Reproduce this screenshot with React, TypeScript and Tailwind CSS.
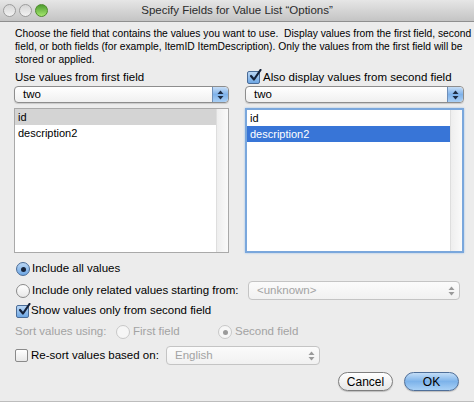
import React from "react";

// ── small mac-style controls ───────────────────────────
function Arrows({ active }: { active: boolean }) {
  return (
    <div
      className={`w-[16px] self-stretch flex items-center justify-center rounded-r-[4px] ${
        active
          ? "bg-gradient-to-b from-[#c6ddf6] via-[#7fb2ea] to-[#a9cff5] border-l border-[#6f8fb8]"
          : ""
      }`}
    >
      <svg width="7" height="10" viewBox="0 0 7 10">
        <path d="M3.5 0.5 L6.5 4 L0.5 4 Z" fill={active ? "#1d2c44" : "#9a9a9a"} />
        <path d="M3.5 9.5 L6.5 6 L0.5 6 Z" fill={active ? "#1d2c44" : "#9a9a9a"} />
      </svg>
    </div>
  );
}

function Popup({
  label,
  className,
  disabled = false,
}: {
  label: string;
  className: string;
  disabled?: boolean;
}) {
  return (
    <div
      className={`flex items-center rounded-[4px] border overflow-hidden shrink-0 ${
        disabled
          ? "border-[#c4c4c4] bg-gradient-to-b from-[#fbfbfb] to-[#f1f1f1]"
          : "border-[#8d8d8d] bg-gradient-to-b from-white to-[#f0f0f0] shadow-[0_1px_1px_rgba(0,0,0,0.15)]"
      } ${className}`}
    >
      <span
        className={`flex-1 pl-[8px] text-[11.5px] leading-none ${
          disabled ? "text-[#a3a3a3]" : "text-black"
        }`}
      >
        {label}
      </span>
      <Arrows active={!disabled} />
    </div>
  );
}

function Radio({ on = false, disabled = false }: { on?: boolean; disabled?: boolean }) {
  const ring = disabled ? "border-[#c8c8c8] bg-[#f6f6f6]" : on
    ? "border-[#4a6c98] bg-gradient-to-b from-[#b9d6f4] to-[#6ea7e4]"
    : "border-[#8a8a8a] bg-gradient-to-b from-white to-[#e8e8e8]";
  return (
    <span className={`w-[14px] h-[14px] rounded-full border flex items-center justify-center shrink-0 ${ring}`}>
      {on && (
        <span className={`w-[5px] h-[5px] rounded-full ${disabled ? "bg-[#9a9a9a]" : "bg-[#16233a]"}`} />
      )}
    </span>
  );
}

function Check({ on = false }: { on?: boolean }) {
  return (
    <span
      className={`relative w-[13px] h-[13px] rounded-[2px] border shrink-0 ${
        on
          ? "border-[#4a6c98] bg-gradient-to-b from-[#b9d6f4] to-[#6ea7e4]"
          : "border-[#8a8a8a] bg-gradient-to-b from-white to-[#e8e8e8]"
      }`}
    >
      {on && (
        <svg className="absolute left-[1px] top-[-3px]" width="13" height="13" viewBox="0 0 13 13">
          <path d="M2 7 L5 10.5 L11.5 1" stroke="#15223a" strokeWidth="2.2" fill="none" strokeLinecap="round" strokeLinejoin="round" />
        </svg>
      )}
    </span>
  );
}

function ListBox({ focused, selected }: { focused: boolean; selected: "id" | "description2" }) {
  const rows = ["id", "description2"];
  return (
    <div
      className={`h-[145px] flex bg-white ${
        focused
          ? "border-2 border-[#7aa7dc] shadow-[0_0_2px_#9cc0ea]"
          : "border border-[#a9a9a9]"
      }`}
    >
      <div className="flex-1 flex flex-col">
        {rows.map((r) => {
          const sel = r === selected;
          return (
            <div
              key={r}
              className={`h-[16px] pl-[3px] flex items-center text-[11px] leading-none ${
                sel
                  ? focused
                    ? "bg-[#3875d7] text-white"
                    : "bg-[#d4d4d4] text-black"
                  : "text-black"
              }`}
            >
              {r}
            </div>
          );
        })}
      </div>
      <div className="w-[12px] border-l border-[#dedede] bg-gradient-to-r from-[#eeeeee] to-[#fafafa]" />
    </div>
  );
}

// ── dialog ──────────────────────────────────────────────
export default function App() {
  return (
    <div
      className="w-[474px] h-[404px] bg-white overflow-hidden"
      style={{ fontFamily: '"Liberation Sans", Arial, sans-serif' }}
    >
      <div className="h-[402px] bg-[#ececec] flex flex-col border-b border-[#bdbdbd]">
        {/* title bar */}
        <div className="h-[22px] shrink-0 flex items-center relative bg-gradient-to-b from-[#e6e6e6] to-[#c4c4c4] border-b border-[#8f8f8f]">
          <div className="flex gap-[3px] pl-[3px]">
            <span className="w-[13px] h-[13px] rounded-full bg-gradient-to-b from-[#d6d6d6] to-[#f2f2f2] border border-[#9c9c9c]" />
            <span className="w-[13px] h-[13px] rounded-full bg-gradient-to-b from-[#d6d6d6] to-[#f2f2f2] border border-[#9c9c9c]" />
            <span className="w-[13px] h-[13px] rounded-full bg-gradient-to-b from-[#4d9d2f] to-[#a4e76e] border border-[#4e8a2c]" />
          </div>
          <span className="absolute inset-x-0 text-center text-[11.5px] text-[#2b2b2b]">
            Specify Fields for Value List “Options”
          </span>
        </div>

        <div className="px-[14px] pt-[5px] flex flex-col text-black text-[11.5px]">
          <p className="pl-[1px] text-[10.3px] leading-[13px] whitespace-nowrap">
            Choose the field that contains the values you want to use.&nbsp; Display values from the first field, second
            <br />
            field, or both fields (for example, ItemID ItemDescription). Only the values from the first field will be
            <br />
            stored or applied.
          </p>

          <div className="mt-[3px] grid grid-cols-[215px_219px] gap-x-[16px]">
            <div className="flex flex-col">
              <div className="h-[17px] pl-[1px] flex items-center">Use values from first field</div>
              <Popup label="two" className="h-[17px]" />
              <div className="mt-[5px]">
                <ListBox focused={false} selected="id" />
              </div>
            </div>
            <div className="flex flex-col">
              <div className="h-[17px] pl-[2px] flex items-center gap-[3px]">
                <Check on />
                Also display values from second field
              </div>
              <Popup label="two" className="h-[17px]" />
              <div className="mt-[5px]">
                <ListBox focused selected="description2" />
              </div>
            </div>
          </div>

          <div className="mt-[7px] pl-[2px] h-[18px] flex items-center gap-[2px]">
            <Radio on />
            Include all values
          </div>
          <div className="mt-[3px] pl-[2px] h-[19px] flex items-center gap-[2px]">
            <Radio />
            <span className="flex-1 min-w-0 whitespace-nowrap">Include only related values starting from:</span>
            <Popup label="<unknown>" disabled className="w-[212px] h-[19px]" />
          </div>
          <div className="mt-[2px] pl-[2px] h-[18px] flex items-center gap-[2px]">
            <Check on />
            Show values only from second field
          </div>
          <div className="mt-[3px] pl-[1px] h-[18px] flex items-center text-[#a3a3a3]">
            <span className="w-[101px]">Sort values using:</span>
            <Radio disabled />
            <span className="ml-[3px] w-[85px]">First field</span>
            <Radio on disabled />
            <span className="ml-[3px]">Second field</span>
          </div>
          <div className="mt-[5px] pl-[1px] h-[19px] flex items-center">
            <Check />
            <span className="ml-[3px] w-[135px] whitespace-nowrap">Re-sort values based on:</span>
            <Popup label="English" disabled className="w-[154px] h-[19px]" />
          </div>

          <div className="mt-[7px] flex justify-end gap-[11px] pr-[1px]">
            <button className="w-[55px] h-[19px] rounded-full border border-[#7e7e7e] bg-gradient-to-b from-white to-[#e6e6e6] text-[12px] leading-none shadow-[0_1px_1px_rgba(0,0,0,0.2)]">
              Cancel
            </button>
            <button className="w-[55px] h-[19px] rounded-full border border-[#4f6f99] bg-gradient-to-b from-[#c3ddf6] via-[#7db3ea] to-[#a9d1f6] text-[12px] leading-none shadow-[0_1px_1px_rgba(0,0,0,0.2)]">
              OK
            </button>
          </div>
        </div>
      </div>
    </div>
  );
}
